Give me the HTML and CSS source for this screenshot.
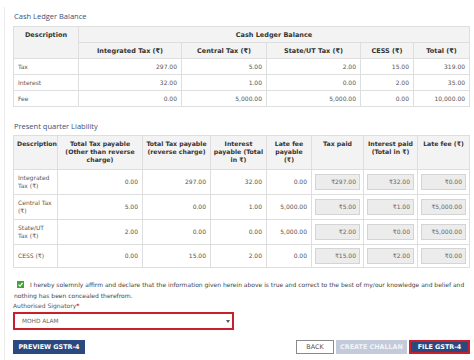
FILE: index.html
```html
<!DOCTYPE html>
<html>
<head>
<meta charset="utf-8">
<link rel="stylesheet" href="styles.css">
</head>
<body>
<div class="panel">
  <h2 class="title">Cash Ledger Balance</h2>
  <table class="grid ledger">
    <colgroup>
      <col style="width:65px"><col style="width:103px"><col style="width:85px"><col style="width:94px"><col style="width:53px"><col style="width:56px">
    </colgroup>
    <thead>
      <tr class="h1"><th rowspan="2" class="desc-h">Description</th><th colspan="5">Cash Ledger Balance</th></tr>
      <tr class="h2"><th>Integrated Tax (₹)</th><th>Central Tax (₹)</th><th>State/UT Tax (₹)</th><th>CESS (₹)</th><th>Total (₹)</th></tr>
    </thead>
    <tbody>
      <tr><td class="l">Tax</td><td>297.00</td><td>5.00</td><td>2.00</td><td>15.00</td><td>319.00</td></tr>
      <tr><td class="l">Interest</td><td>32.00</td><td>1.00</td><td>0.00</td><td>2.00</td><td>35.00</td></tr>
      <tr><td class="l">Fee</td><td>0.00</td><td>5,000.00</td><td>5,000.00</td><td>0.00</td><td>10,000.00</td></tr>
    </tbody>
  </table>

  <h2 class="title second">Present quarter Liability</h2>
  <table class="grid liability">
    <colgroup>
      <col style="width:44px"><col style="width:85px"><col style="width:68px"><col style="width:56px"><col style="width:45px"><col style="width:52px"><col style="width:54px"><col style="width:52px">
    </colgroup>
    <thead>
      <tr>
        <th class="lh">Description</th>
        <th>Total Tax payable (Other than reverse charge)</th>
        <th>Total Tax payable (reverse charge)</th>
        <th class="tight">Interest payable (Total in ₹)</th>
        <th>Late fee payable (₹)</th>
        <th>Tax paid</th>
        <th>Interest paid (Total in ₹)</th>
        <th>Late fee (₹)</th>
      </tr>
    </thead>
    <tbody>
      <tr><td class="l">Integrated Tax (₹)</td><td>0.00</td><td>297.00</td><td>32.00</td><td>0.00</td><td class="in"><span class="box">₹297.00</span></td><td class="in"><span class="box">₹32.00</span></td><td class="in"><span class="box">₹0.00</span></td></tr>
      <tr><td class="l">Central Tax (₹)</td><td>5.00</td><td>0.00</td><td>1.00</td><td>5,000.00</td><td class="in"><span class="box">₹5.00</span></td><td class="in"><span class="box">₹1.00</span></td><td class="in"><span class="box">₹5,000.00</span></td></tr>
      <tr><td class="l">State/UT Tax (₹)</td><td>2.00</td><td>0.00</td><td>0.00</td><td>5,000.00</td><td class="in"><span class="box">₹2.00</span></td><td class="in"><span class="box">₹0.00</span></td><td class="in"><span class="box">₹5,000.00</span></td></tr>
      <tr class="last"><td class="l">CESS (₹)</td><td>0.00</td><td>15.00</td><td>2.00</td><td>0.00</td><td class="in"><span class="box">₹15.00</span></td><td class="in"><span class="box">₹2.00</span></td><td class="in"><span class="box">₹0.00</span></td></tr>
    </tbody>
  </table>

  <div class="declare">
    <span class="check"><svg viewBox="0 0 7 7" width="7" height="7"><rect x="0" y="0" width="7" height="7" fill="#3fa535"/><path d="M1.5 3.6 L3 5.1 L5.6 1.8" stroke="#fff" stroke-width="1.2" fill="none"/></svg></span>
    I hereby solemnly affirm and declare that the information given herein above is true and correct to the best of my/our knowledge and belief and nothing has been concealed therefrom.
  </div>
  <div class="label">Authorised Signatory<span class="req">*</span></div>
  <div class="select">
    <span>MOHD ALAM</span>
    <span class="caret"></span>
  </div>

  <div class="actions">
    <button class="btn primary">PREVIEW GSTR-4</button>
    <div class="right">
      <button class="btn outline">BACK</button>
      <button class="btn disabled">CREATE CHALLAN</button>
      <button class="btn primary file">FILE GSTR-4</button>
    </div>
  </div>
</div>
</body>
</html>
```

FILE: styles.css
```css
* { box-sizing: border-box; }
html, body { margin: 0; padding: 0; background: #fff; }
body {
  font-family: "DejaVu Sans", Verdana, sans-serif;
  color: #444;
  width: 474px;
  height: 360px;
  overflow: hidden;
}
.panel {
  margin: 7px 0 0 4px;
  border-left: 1px solid #ececec;
  padding: 4px 0 0 8px;
  width: 466px;
  height: 353px;
}
.title {
  margin: 0 0 4px 1px;
  font-family: "Open Sans", "Liberation Sans", sans-serif;
  font-weight: normal;
  font-size: 7.5px;
  line-height: 11px;
  color: #3b4f74;
}
.title.second { margin-top: 14px; margin-bottom: 3px; }
.grid {
  border-collapse: collapse;
  table-layout: fixed;
  width: 456px;
  font-size: 6px;
}
.grid th, .grid td {
  border: 1px solid #dedede;
  padding: 0 4px;
}
.grid th {
  background: #f3f3f3;
  color: #333;
  font-weight: bold;
  font-size: 6.5px;
  text-align: center;
}
.grid td {
  text-align: right;
  color: #555;
  background: #fff;
}
.grid td.l { text-align: left; }
.ledger tr { height: 16px; }
.ledger th.desc-h { vertical-align: top; padding-top: 4px; }
.liability thead tr { height: 34px; }
.liability th {
  vertical-align: top;
  padding: 4px 3px 0;
  line-height: 8px;
  font-size: 6.2px;
}
.liability th.tight { padding-left: 1px; padding-right: 1px; }
.liability th.lh { text-align: left; }
.liability td { line-height: 8.5px; height: 25px; }
.liability tr.last td { height: 23px; }
.liability td.in { padding: 0 3px; }
.box {
  display: block;
  height: 16px;
  line-height: 14px;
  background: #ececec;
  border: 1px solid #d4d4d4;
  padding: 0 3px;
  color: #666;
  text-align: right;
}
.declare {
  margin-top: 12px;
  font-size: 6px;
  line-height: 10px;
  color: #444;
  padding-left: 1px;
}
.check { display: inline-block; vertical-align: -1px; margin: 0 4px 0 3px; }
.label {
  font-size: 6px;
  line-height: 10px;
  color: #555;
}
.req { color: #c3161c; font-weight: bold; }
.select {
  margin-top: 1px;
  width: 221px;
  height: 18px;
  border: 2px solid #c8202a;
  background: #fff;
  display: flex;
  align-items: center;
  justify-content: space-between;
  padding: 0 2px 0 7px;
  font-size: 5.8px;
  color: #666;
}
.caret {
  width: 0; height: 0;
  border-left: 2px solid transparent;
  border-right: 2px solid transparent;
  border-top: 3px solid #555;
}
.actions {
  margin-top: 10px;
  display: flex;
  justify-content: space-between;
  width: 457px;
}
.right { display: flex; gap: 2px; }
.btn {
  height: 14px;
  border: 0;
  font-family: "DejaVu Sans", Verdana, sans-serif;
  font-size: 6.4px;
  font-weight: bold;
  padding: 0;
  margin: 0;
  color: #fff;
}
.btn.primary { background: #2a4a7f; width: 72px; }
.btn.outline { background: #fff; color: #555; border: 1px solid #8a8a8a; width: 38px; font-weight: normal; }
.btn.disabled { background: #c3cada; width: 71px; color: #f2f4f8; }
.btn.file { width: 61px; border: 2px solid #c8202a; }
```
